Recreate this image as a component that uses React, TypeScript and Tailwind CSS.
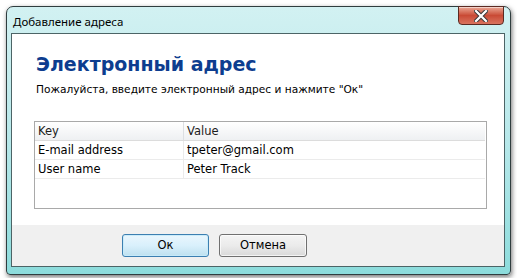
import React from "react";

export default function App() {
  const rows = [
    ["E-mail address", "tpeter@gmail.com"],
    ["User name", "Peter Track"],
  ];
  return (
    <div className="w-[517px] h-[278px] bg-white overflow-hidden pt-[6px] pl-[6px]">
      <div
        className="w-[505px] h-[269px] border border-[#2f3d3f] rounded-t-[7px] rounded-b-[4px] bg-gradient-to-b from-[#d2f1f2] via-[#b7e8ea] to-[#8cdcdc] flex flex-col pl-[4px] pr-[5px] pb-[7px] shadow-[1px_2px_5px_rgba(0,0,0,0.55)]"
      >
        <div className="h-[26px] flex items-start justify-between">
          <span
            className="mt-[7px] ml-[2px] text-[11.5px] leading-[15px] text-black"
            style={{ fontFamily: '"Noto Sans", "Open Sans", sans-serif' }}
          >
            Добавление адреса
          </span>
          <div className="mr-[1px] w-[46px] h-[19px] -mt-[1px] rounded-b-[4px] border border-[#5a2a22] bg-gradient-to-b from-[#e9a795] via-[#c94a35] to-[#d9735f] flex items-center justify-center shadow-[inset_0_1px_0_rgba(255,255,255,0.5)]">
            <svg width="14" height="12" viewBox="0 0 14 12">
              <path d="M2 1 L12 11 M12 1 L2 11" stroke="#3a3a3a" strokeWidth="4.2" strokeLinecap="square" />
              <path d="M2 1 L12 11 M12 1 L2 11" stroke="#ffffff" strokeWidth="2.2" strokeLinecap="square" />
            </svg>
          </div>
        </div>
        <div
          className="flex-1 border border-[#4c6466] bg-white flex flex-col"
          style={{ fontFamily: '"DejaVu Sans", Verdana, sans-serif' }}
        >
          <div className="flex-1 pl-[24px] pr-[17px] pt-[18px]">
            <div className="text-[19px] leading-[24px] font-bold text-[#0d3d8f]">Электронный адрес</div>
            <div className="mt-[6px] text-[10.6px] leading-[14px] text-black">
              Пожалуйста, введите электронный адрес и нажмите "Ок"
            </div>
            <div className="mt-[25px] -ml-[2px] h-[88px] border border-[#a9a9a9] bg-white pr-[1px]">
              <div className="flex h-[19px] border-b border-[#dcdcdc] bg-gradient-to-b from-[#ffffff] to-[#eef0f2] text-[11.5px] leading-[18px] text-[#1c1c1c]">
                <div className="w-[149px] pl-[3px] border-r border-[#dcdfe2]">Key</div>
                <div className="flex-1 pl-[3px]">Value</div>
              </div>
              {rows.map(([k, v]) => (
                <div key={k} className="flex h-[19px] border-b border-[#ebebeb] text-[11.5px] leading-[18px] text-black">
                  <div className="w-[149px] pl-[3px] border-r border-[#ebebeb]">{k}</div>
                  <div className="flex-1 pl-[3px]">{v}</div>
                </div>
              ))}
            </div>
          </div>
          <div className="h-[41px] bg-[#f0f0f0] flex items-start pt-[9px] pl-[110px] gap-[10px]">
            <button className="w-[87px] h-[23px] rounded-[3px] border border-[#3c7fb1] bg-gradient-to-b from-[#eaf6fd] via-[#d9f0fc] to-[#bee0ef] text-[11.5px] text-black shadow-[inset_0_0_0_1px_rgba(200,235,250,0.9)]">
              Ок
            </button>
            <button className="w-[88px] h-[23px] rounded-[3px] border border-[#707070] bg-gradient-to-b from-[#f4f4f4] via-[#ebebeb] to-[#d9d9d9] text-[11.5px] text-black shadow-[inset_0_0_0_1px_rgba(255,255,255,0.7)]">
              Отмена
            </button>
          </div>
        </div>
      </div>
    </div>
  );
}
